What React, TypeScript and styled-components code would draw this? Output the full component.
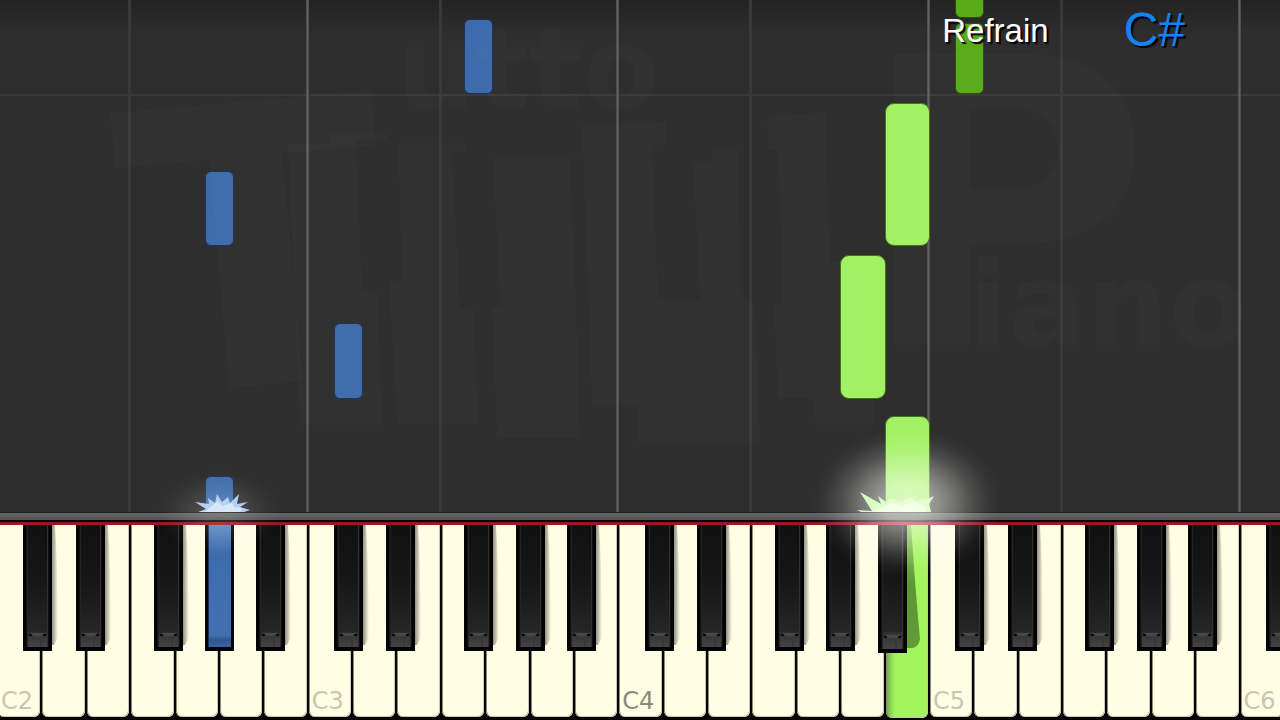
import React from "react";
import styled, { createGlobalStyle, css } from "styled-components";

const GlobalStyle = createGlobalStyle`
  *, *::before, *::after { box-sizing: border-box; }
  body { margin: 0; background: #2e2e2e; overflow: hidden; }
`;

type Tone = "blue" | "lime" | "green";

const tones: Record<Tone, { fill: string; edge: string }> = {
  blue: { fill: "#3e6bac", edge: "#1d3252" },
  lime: { fill: "#a2f163", edge: "#47701f" },
  green: { fill: "#59ab17", edge: "#2a4f0c" },
};

/* Horizontal shift of each sharp from the line between its two white keys */
const sharpShift: Record<string, number> = { C: -4, D: 4, F: -7, G: 0, A: 7 };

const names = ["C", "D", "E", "F", "G", "A", "B"];
const whiteKeys = Array.from({ length: 29 }, (_, i) => ({
  name: names[i % 7],
  octave: 2 + Math.floor(i / 7),
}));

interface NoteData {
  pitch: string;
  sharp?: boolean;
  tone: Tone;
  bottom: number;
  length: number;
}

const notes: NoteData[] = [
  { pitch: "G2", sharp: true, tone: "blue", bottom: -10, length: 46 },
  { pitch: "G2", sharp: true, tone: "blue", bottom: 266, length: 75 },
  { pitch: "C3", sharp: true, tone: "blue", bottom: 113, length: 76 },
  { pitch: "F3", sharp: true, tone: "blue", bottom: 418, length: 75 },
  { pitch: "B4", tone: "lime", bottom: -10, length: 106 },
  { pitch: "A4", tone: "lime", bottom: 113, length: 144 },
  { pitch: "B4", tone: "lime", bottom: 266, length: 143 },
  { pitch: "C5", sharp: true, tone: "green", bottom: 418, length: 71 },
  { pitch: "C5", sharp: true, tone: "green", bottom: 494, length: 60 },
];

const Stage = styled.main`
  display: flex;
  flex-direction: column;
  min-height: 100vh;
  overflow: hidden;
  background: #2e2e2e;
`;

const Roll = styled.section`
  position: relative;
  flex: 1;
  display: flex;
  min-height: 480px;
  overflow: hidden;
  background: linear-gradient(#232323, #2e2e2e 36px);
`;

const Lanes = styled.div`
  flex: 1;
  display: flex;
  margin: 0 -4px 0 -3px;
`;

const Lane = styled.div<{ $line?: "strong" | "faint" }>`
  position: relative;
  flex: 1 1 0;
  min-width: 0;
  &::before {
    content: "";
    display: ${(p) => (p.$line ? "block" : "none")};
    width: 3px;
    height: 100%;
    margin-left: -2px;
    background: ${(p) =>
      p.$line === "strong"
        ? "linear-gradient(90deg, #464646, #626262, #464646)"
        : "#393939"};
  }
`;

const BarLine = styled.div`
  position: absolute;
  left: 0;
  right: 0;
  bottom: 416px;
  height: 2px;
  background: #3a3a3a;
`;

const Note = styled.div<{ $tone: Tone; $sharp?: boolean; $shift: number; $bottom: number; $length: number }>`
  position: absolute;
  z-index: 1;
  bottom: ${(p) => p.$bottom}px;
  height: ${(p) => p.$length}px;
  background: ${(p) => tones[p.$tone].fill};
  border: 1px solid ${(p) => tones[p.$tone].edge};
  ${(p) =>
    p.$sharp
      ? css`
          left: calc(100% + ${p.$shift}px - 14px);
          width: 29px;
          border-radius: 6px;
        `
      : css`
          left: 0;
          right: -1px;
          border-radius: 9px;
        `}
`;

const Spark = styled.svg<{ $width: number; $at: string }>`
  position: absolute;
  z-index: 2;
  bottom: 0;
  left: calc(${(p) => p.$at} - ${(p) => p.$width / 2}px);
  width: ${(p) => p.$width}px;
  height: 26px;
`;

const Watermark = styled.svg`
  position: absolute;
  z-index: 3;
  left: 0;
  bottom: 0;
  width: 100%;
  height: 512px;
  pointer-events: none;
  fill: rgba(255, 255, 255, 0.017);
  font-family: "DejaVu Sans", sans-serif;
  font-weight: 700;
`;

const Captions = styled.header`
  position: absolute;
  z-index: 4;
  top: 6px;
  right: 95px;
  display: flex;
  align-items: center;
  gap: 75px;
  font-family: "Liberation Sans", Arial, sans-serif;
  line-height: 1;
`;

const Caption = styled.span<{ $chord?: boolean }>`
  font-size: ${(p) => (p.$chord ? 48 : 33)}px;
  color: ${(p) => (p.$chord ? "#1284f4" : "#ffffff")};
  text-shadow: 2px 2px 1px #000;
`;

const Rail = styled.div`
  position: relative;
  z-index: 5;
  display: flex;
  height: 13px;
  border-top: 1px solid #222;
  background: linear-gradient(#666 0, #515151 7px, #080808 7px, #080808 9px, #8f1420 9px, #a51a26 12px);
`;

const Glow = styled.div<{ $width: number; $height: number; $at: string; $rise: number; $strength: number }>`
  position: absolute;
  left: calc(${(p) => p.$at} - ${(p) => p.$width / 2}px);
  top: ${(p) => -p.$height / 2 - p.$rise}px;
  width: ${(p) => p.$width}px;
  height: ${(p) => p.$height}px;
  pointer-events: none;
  background: radial-gradient(
    closest-side,
    rgba(255, 255, 250, ${(p) => p.$strength}),
    rgba(255, 255, 250, ${(p) => p.$strength * 0.88}) 25%,
    rgba(255, 255, 250, ${(p) => p.$strength * 0.62}) 45%,
    rgba(255, 255, 250, ${(p) => p.$strength * 0.26}) 68%,
    rgba(255, 255, 250, ${(p) => p.$strength * 0.07}) 86%,
    rgba(255, 255, 250, 0)
  );
`;

const Keyboard = styled.section`
  display: flex;
  height: 195px;
  padding-bottom: 3px;
  background: #050505;
`;

const KeyCell = styled.div`
  position: relative;
  flex: 1 1 0;
  min-width: 0;
  display: flex;
`;

const WhiteKey = styled.button<{ $pressed?: boolean; $middle?: boolean }>`
  flex: 1;
  min-width: 0;
  display: flex;
  align-items: flex-end;
  margin: 0 1px;
  margin-bottom: ${(p) => (p.$pressed ? -1 : 0)}px;
  padding: 0 0 4px 3px;
  border: 0;
  border-radius: 0 0 6px 6px;
  font: 24px/24px "DejaVu Sans", sans-serif;
  color: ${(p) => (p.$middle ? "#8b897b" : "#c9c6b0")};
  background: ${(p) =>
    p.$pressed
      ? "linear-gradient(90deg, #6da63f 0, #8ed653 5px, #a3f55f 9px)"
      : "#fffde4"};
  box-shadow: inset 1px 0 0 #8a897c, inset -1px -1px 0 #c9c7b4;
`;

const BlackKey = styled.button<{ $shift: number; $tone?: Tone; $low?: boolean }>`
  position: absolute;
  z-index: 2;
  top: -2px;
  left: calc(100% + ${(p) => p.$shift}px - 14px);
  width: 29px;
  height: ${(p) => (p.$low ? 130 : 128)}px;
  padding: 0;
  border: solid #030303;
  border-width: 0 3px 4px;
  background: ${(p) =>
    p.$tone
      ? "linear-gradient(#5785c2, #3d6cae 30px, #4270b2 112px, #2e5791 117px, #3964a4)"
      : "linear-gradient(#101010, #171717 60px, #262626 109px, #333 110px, #434343)"};
  box-shadow: ${(p) =>
    p.$tone ? "inset 1px 0 0 #1d3252" : "inset 1px 0 0 #101010, inset 2px 0 0 #242424, inset -1px 0 0 #101010, inset -2px 0 0 #303030"};
`;

const KeyNotch = styled.svg`
  position: absolute;
  left: 0;
  bottom: 0;
  width: 23px;
  height: 15px;
`;

const KeyShadow = styled.svg<{ $shift: number }>`
  position: absolute;
  z-index: 1;
  top: 0;
  left: calc(100% + ${(p) => p.$shift}px + 14px);
  width: 16px;
  height: 128px;
  pointer-events: none;
`;

function Emblem() {
  return (
    <Watermark viewBox="0 0 1280 512" preserveAspectRatio="xMidYMax meet" aria-hidden="true">
      <path d="M288 144H331V133H387V140H356L362 292H378L382 425H300Z" />
      <path d="M398 143H467V152H452L460 308H474L478 423H397L389 282L402 280Z" />
      <path d="M493 157H570L576 300L580 438H497L492 308L500 306Z" />
      <path d="M582 124L666 122V145H652L658 300H700L693 163L712 162V149H738L741 298L755 305L760 443H638L637 405H592Z" />
      <path d="M767 116L825 112L830 262H868L875 425H816L812 398H778L774 304H783L778 150H768Z" />
      <text x="120" y="386" fontSize="390" transform="rotate(-5 245 240)">T</text>
      <text x="396" y="108" fontSize="112">utto</text>
      <text x="858" y="345" fontSize="400">P</text>
      <text x="968" y="345" fontSize="116">iano</text>
    </Watermark>
  );
}

function LaneNotes({ pitch, name }: { pitch: string; name: string }) {
  return (
    <>
      {notes
        .filter((n) => n.pitch === pitch)
        .map((n) => (
          <Note
            key={n.bottom}
            $tone={n.tone}
            $sharp={n.sharp}
            $shift={sharpShift[name] ?? 0}
            $bottom={n.bottom}
            $length={n.length}
          />
        ))}
    </>
  );
}

function Shadow({ shift, deep }: { shift: number; deep: boolean }) {
  return (
    <KeyShadow $shift={shift} viewBox="0 0 16 128" aria-hidden="true">
      <defs>
        <linearGradient id="soft">
          <stop offset="0" stopColor="#55544a" stopOpacity="0.75" />
          <stop offset="1" stopColor="#55544a" stopOpacity="0" />
        </linearGradient>
        <linearGradient id="deep" x2="0" y2="1">
          <stop offset="0" stopColor="#4d7d2b" stopOpacity="0.45" />
          <stop offset="0.5" stopColor="#4d7d2b" stopOpacity="0.8" />
          <stop offset="1" stopColor="#4d7d2b" stopOpacity="0.75" />
        </linearGradient>
      </defs>
      {deep ? (
        <path d="M0 0H5Q9 60 14 114Q13 121 7 123H0Z" fill="url(#deep)" />
      ) : (
        <path d="M0 0H4Q7 50 7 112L3 120H0Z" fill="url(#soft)" />
      )}
    </KeyShadow>
  );
}

export default function App() {
  return (
    <>
      <GlobalStyle />
      <Stage>
        <Roll aria-label="Falling notes">
          <BarLine />
          <Lanes>
            {whiteKeys.map(({ name, octave }) => {
              const pitch = name + octave;
              return (
                <Lane key={pitch} $line={name === "C" ? "strong" : name === "F" ? "faint" : undefined}>
                  <LaneNotes pitch={pitch} name={name} />
                  {pitch === "G2" && (
                    <Spark $width={60} $at="100% + 3px" viewBox="0 0 60 26" aria-hidden="true">
                      <path
                        d="M6 26L14 23L3 16L17 18L16 12L23 17L25 8L30 16L36 11L38 17L47 8L45 18L56 16L48 21L58 24L52 26Z"
                        fill="#a9c9f2"
                      />
                      <path d="M12 26L20 20L26 15L30 20L40 17L42 21L50 22L48 26Z" fill="#cfe3fc" />
                    </Spark>
                  )}
                  {pitch === "B4" && (
                    <Spark $width={80} $at="50% - 10px" viewBox="0 0 80 26" aria-hidden="true">
                      <path
                        d="M0 24L15 25L3 6L24 18L21 10L29 16L34 12L44 16L54 11L60 16L66 12L68 14L77 10L72 18L74 26H4Z"
                        fill="#c3f99b"
                      />
                      <path d="M15 26L25 21L36 17L46 19L58 16L68 20L70 26Z" fill="#e3ffd0" />
                    </Spark>
                  )}
                </Lane>
              );
            })}
          </Lanes>
          <Emblem />
          <Captions>
            <Caption>Refrain</Caption>
            <Caption $chord>C#</Caption>
          </Captions>
        </Roll>

        <Rail>
          <Lanes>
            {whiteKeys.map(({ name, octave }) => (
              <Lane key={name + octave}>
                {name + octave === "G2" && (
                  <Glow $width={130} $height={90} $at="100%" $rise={0} $strength={0.16} />
                )}
                {name + octave === "B4" && (
                  <Glow $width={190} $height={150} $at="50%" $rise={10} $strength={0.6} />
                )}
              </Lane>
            ))}
          </Lanes>
        </Rail>

        <Keyboard aria-label="Piano keyboard">
          <Lanes>
            {whiteKeys.map(({ name, octave }) => {
              const pitch = name + octave;
              const shift = sharpShift[name];
              const sounding = pitch === "G2";
              const low = pitch === "A4";
              return (
                <KeyCell key={pitch}>
                  <WhiteKey type="button" aria-label={pitch} $pressed={pitch === "B4"} $middle={pitch === "C4"}>
                    {name === "C" ? pitch : null}
                  </WhiteKey>
                  {shift !== undefined && (
                    <>
                      {!sounding && (
                        <Shadow shift={shift} deep={low} />
                      )}
                      <BlackKey
                        type="button"
                        aria-label={`${name}#${octave}`}
                        $shift={shift}
                        $low={low}
                        $tone={sounding ? "blue" : undefined}
                      >
                        {!sounding && (
                          <KeyNotch viewBox="0 0 23 15" aria-hidden="true">
                            <path d="M3 2L6 3L4 4Z M20 2L17 3L19 4Z" fill="#080808" stroke="#080808" />
                            <path d="M4 1H19L15 4H8Z" fill="#484848" />
                            <path d="M15 8V15" stroke="#333" />
                          </KeyNotch>
                        )}
                      </BlackKey>
                    </>
                  )}
                </KeyCell>
              );
            })}
          </Lanes>
        </Keyboard>
      </Stage>
    </>
  );
}
